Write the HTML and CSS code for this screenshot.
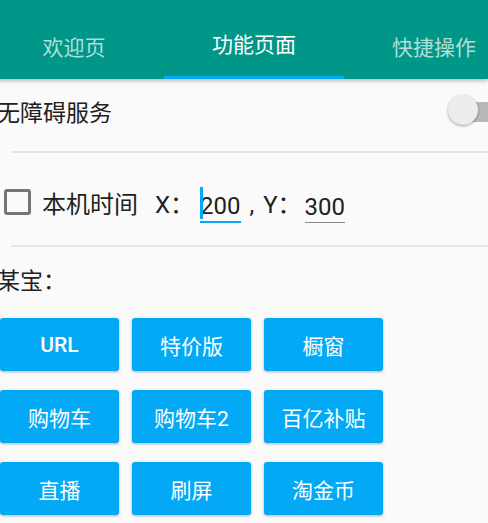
FILE: index.html
```html
<!DOCTYPE html>
<html lang="zh">
<head>
  <meta charset="UTF-8">
  <meta name="viewport" content="width=device-width, initial-scale=1.0">
  <title>功能页面</title>
  <link rel="stylesheet" href="styles.css">
</head>
<body>
  <!-- Вкладки -->
  <div class="tabs">
    <div class="tab">欢迎页</div>
    <div class="tab tab-active">功能页面</div>
    <div class="tab">快捷操作</div>
  </div>

  <div class="content">
    <!-- 无障碍服务 -->
    <div class="service-row">
      <span class="service-label">无障碍服务</span>
      <div class="switch">
        <div class="switch-track"></div>
        <div class="switch-thumb"></div>
      </div>
    </div>
    <div class="divider divider1"></div>

    <!-- 本机时间 -->
    <div class="time-row">
      <span class="checkbox"></span>
      <span class="time-label">本机时间</span>
      <span class="coord-label">X：</span>
      <span class="coord-input coord-focused">200</span>
      <span class="coord-sep">, Y：</span>
      <span class="coord-input">300</span>
    </div>
    <div class="divider divider2"></div>

    <!-- 某宝 -->
    <div class="section-label">某宝：</div>
    <div class="buttons">
      <div class="btn btn-latin">URL</div>
      <div class="btn">特价版</div>
      <div class="btn">橱窗</div>
      <div class="btn">购物车</div>
      <div class="btn">购物车2</div>
      <div class="btn">百亿补贴</div>
      <div class="btn">直播</div>
      <div class="btn">刷屏</div>
      <div class="btn">淘金币</div>
    </div>
  </div>
</body>
</html>
```

FILE: styles.css
```css
/* Загальні стилі */
html, body {
  margin: 0;
  padding: 0;
  width: 100%;
  height: 100%;
  overflow: hidden;
  background-color: #fafafa;
  font-family: "Roboto", "Noto Sans CJK SC", sans-serif;
  color: #212121;
}

/* Вкладки */
.tabs {
  position: relative;
  z-index: 1;
  display: flex;
  height: 79px;
  margin-left: -16px;
  background-color: #009688;
  box-shadow: 0 2px 4px rgba(0, 0, 0, 0.25);
}

.tab {
  flex: 0 0 180px;
  box-sizing: border-box;
  display: flex;
  justify-content: center;
  align-items: center;
  padding-top: 12px;
  font-size: 21px;
  color: rgba(255, 255, 255, 0.7);
}

.tab-active {
  color: #ffffff;
  border-bottom: 3px solid #03a9f4;
  padding-top: 9px;
}

/* Рядок з перемикачем */
.service-row {
  display: flex;
  align-items: center;
  justify-content: space-between;
  height: 64px;
}

.service-label {
  margin-left: -3px;
  font-size: 23px;
}

.switch {
  position: relative;
  width: 42px;
  height: 34px;
  overflow: hidden;
}

.switch-track {
  position: absolute;
  left: 14px;
  top: 8px;
  width: 50px;
  height: 20px;
  border-radius: 10px;
  background-color: #b9b9b9;
}

.switch-thumb {
  position: absolute;
  left: 2px;
  top: 1px;
  width: 30px;
  height: 30px;
  border-radius: 50%;
  background-color: #ececec;
  box-shadow: 0 1px 3px rgba(0, 0, 0, 0.35);
}

/* Роздільники */
.divider {
  height: 2px;
  margin-left: 11px;
  background-color: #e4e4e4;
}

.divider1 {
  margin-top: 8px;
}

.divider2 {
  margin-top: 13px;
}

/* Рядок часу */
.time-row {
  display: flex;
  align-items: center;
  height: 60px;
  margin-top: 19px;
  font-size: 24px;
}

.checkbox {
  box-sizing: border-box;
  width: 27px;
  height: 26px;
  margin-left: 4px;
  border: 3px solid #757575;
  border-radius: 3px;
}

.time-label {
  margin-left: 11px;
}

.coord-label {
  margin-left: 17px;
}

.coord-input {
  position: relative;
  display: inline-block;
  line-height: 30px;
  border-bottom: 1.5px solid #8a8a8a;
  margin-top: 10px;
}

.coord-focused {
  margin-left: 6px;
  border-bottom: 2px solid #03a9f4;
}

/* Курсор */
.coord-focused::before {
  content: "";
  position: absolute;
  left: 0;
  top: -4px;
  width: 3px;
  height: 32px;
  background-color: #03a9f4;
}

.coord-sep {
  margin-left: 9px;
  margin-right: 3px;
  word-spacing: 3px;
}

/* Кнопки */
.section-label {
  margin-top: 20px;
  margin-left: -3px;
  font-size: 23px;
  line-height: 30px;
}

.buttons {
  display: grid;
  grid-template-columns: repeat(3, 119px);
  grid-auto-rows: 53px;
  column-gap: 13px;
  row-gap: 19px;
  margin-top: 21px;
}

.btn {
  display: flex;
  justify-content: center;
  align-items: center;
  border-radius: 3px;
  background-color: #03a9f4;
  box-shadow: 0 1px 3px rgba(0, 0, 0, 0.3);
  color: #ffffff;
  font-size: 21px;
}

.btn-latin {
  font-weight: 500;
}
```
